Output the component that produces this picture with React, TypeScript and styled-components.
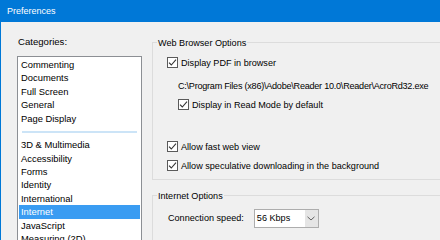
import React from 'react'
import styled, { createGlobalStyle } from 'styled-components'

// G L O B A L
const GlobalStyle = createGlobalStyle`
  html, body {
    margin: 0;
    padding: 0;
  }

  body {
    width: 440px;
    height: 240px;
    overflow: hidden;
    background: #f0f0f0;
    font-family: 'Liberation Sans', Arial, sans-serif;
    color: #000;
  }
`

// D A T A
const topCategories = ['Commenting', 'Documents', 'Full Screen', 'General', 'Page Display']
const moreCategories = [
  '3D & Multimedia',
  'Accessibility',
  'Forms',
  'Identity',
  'International',
  'Internet',
  'JavaScript',
  'Measuring (2D)',
  'Measuring (3D)'
]

// I C O N S
const CheckMark: React.FC = () => (
  <svg width='9' height='9' viewBox='0 0 9 9'>
    <polyline points='1,4.6 3.3,7 8,1.6' fill='none' stroke='#333' strokeWidth='1.1' />
  </svg>
)

const Chevron: React.FC = () => (
  <svg width='8' height='5' viewBox='0 0 8 5'>
    <polyline points='0.5,0.8 4,4 7.5,0.8' fill='none' stroke='#606060' strokeWidth='1' />
  </svg>
)

// C O M P O N E N T S
interface CheckRowProps {
  label: string
  indent?: number
  gap?: number
}

const CheckRow: React.FC<CheckRowProps> = ({ label, indent = 10, gap = 0 }) => (
  <Row indent={indent} gap={gap}>
    <Box><CheckMark /></Box>
    <span>{label}</span>
  </Row>
)

export default function App () {
  return (
    <>
      <GlobalStyle />
      <Window>
        <TitleBar>Preferences</TitleBar>
        <Body>
          <Sidebar>
            <Label>Categories:</Label>
            <ListBox>
              {topCategories.map((c) => <Item key={c}>{c}</Item>)}
              <Separator />
              {moreCategories.map((c) => (
                <Item key={c} selected={c === 'Internet'}>{c}</Item>
              ))}
            </ListBox>
          </Sidebar>
          <Main>
            <Group>
              <Legend>Web Browser Options</Legend>
              <CheckRow label='Display PDF in browser' gap={7} />
              <PathText>C:\Program Files (x86)\Adobe\Reader 10.0\Reader\AcroRd32.exe</PathText>
              <CheckRow label='Display in Read Mode by default' indent={21} gap={5} />
              <CheckRow label='Allow fast web view' gap={28} />
              <CheckRow label='Allow speculative downloading in the background' gap={5} />
              <GroupEnd />
            </Group>
            <Group spaced>
              <Legend>Internet Options</Legend>
              <SpeedRow>
                <span>Connection speed:</span>
                <Select>
                  <SelectValue>56 Kbps</SelectValue>
                  <SelectButton><Chevron /></SelectButton>
                </Select>
              </SpeedRow>
            </Group>
          </Main>
        </Body>
      </Window>
    </>
  )
}

// S T Y L E S
const Window = styled.div`
  box-sizing: border-box;
  display: flex;
  flex-direction: column;
  width: 440px;
  height: 240px;
  overflow: hidden;
  border-left: 1px solid #0078d7;
  background: #f0f0f0;
`

const TitleBar = styled.div`
  flex: none;
  display: flex;
  align-items: center;
  height: 22px;
  padding-left: 6px;
  background: #0078d7;
  color: #fff;
  font-size: 9px;
`

const Body = styled.div`
  display: flex;
  flex: 1;
  min-height: 0;
  font-size: 9.1px;
  line-height: 12px;
`

const Sidebar = styled.div`
  box-sizing: border-box;
  flex: none;
  display: flex;
  flex-direction: column;
  width: 151px;
  padding: 14px 0 0 16px;
`

const Label = styled.div`
  padding-left: 1px;
  height: 12px;
  margin-bottom: 8px;
  font-size: 9.6px;
`

const ListBox = styled.div`
  flex: none;
  width: 125px;
  box-sizing: border-box;
  height: 200px;
  padding-top: 1px;
  border: 1px solid #8c8f94;
  background: #fff;
`

const Item = styled.div<{ selected?: boolean }>`
  height: 13.4px;
  line-height: 13.4px;
  margin: 0 1px;
  padding-left: 2px;
  white-space: nowrap;
  font-size: 9.4px;
  background: ${(props) => props.selected ? '#3a9cf2' : 'transparent'};
  color: ${(props) => props.selected ? '#fff' : '#000'};
`

const Separator = styled.div`
  height: 2px;
  margin: 5.7px 4px 5.6px 4px;
  background: #cce4f7;
`

const Main = styled.div`
  flex: 1;
  display: flex;
  flex-direction: column;
  padding-top: 14.7px;
`

const Group = styled.fieldset<{ spaced?: boolean }>`
  margin: ${(props) => props.spaced ? '9.3px 0 0 0' : '0'};
  padding: 0 0 0 4px;
  min-inline-size: 0;
  border: 1px solid #dcdcdc;
  border-right: none;
  ${(props) => props.spaced ? 'border-bottom: none; flex: 1;' : ''}
`

const Legend = styled.legend`
  padding: 0 1px;
  line-height: 12px;
`

const Row = styled.div<{ indent: number, gap: number }>`
  display: flex;
  align-items: center;
  gap: 3px;
  height: 14px;
  margin-left: ${(props) => props.indent}px;
  margin-top: ${(props) => props.gap}px;
  white-space: nowrap;
`

const Box = styled.span`
  box-sizing: border-box;
  display: flex;
  align-items: center;
  justify-content: center;
  width: 11px;
  height: 11px;
  border: 1px solid #5a5a5a;
  background: #fff;
`

const PathText = styled.div`
  height: 14px;
  line-height: 14px;
  margin: 9px 0 0 21px;
  white-space: nowrap;
  letter-spacing: -0.25px;
`

const GroupEnd = styled.div`
  height: 6.7px;
`

const SpeedRow = styled.div`
  display: flex;
  align-items: center;
  gap: 10px;
  margin: 7px 0 0 11px;
`

const Select = styled.div`
  box-sizing: border-box;
  display: flex;
  width: 65px;
  height: 19px;
  border: 1px solid #adadad;
  background: #fff;
`

const SelectValue = styled.div`
  flex: 1;
  display: flex;
  align-items: center;
  padding-left: 2px;
`

const SelectButton = styled.div`
  flex: none;
  display: flex;
  align-items: center;
  justify-content: center;
  width: 13px;
  background: #e5e5e5;
`
